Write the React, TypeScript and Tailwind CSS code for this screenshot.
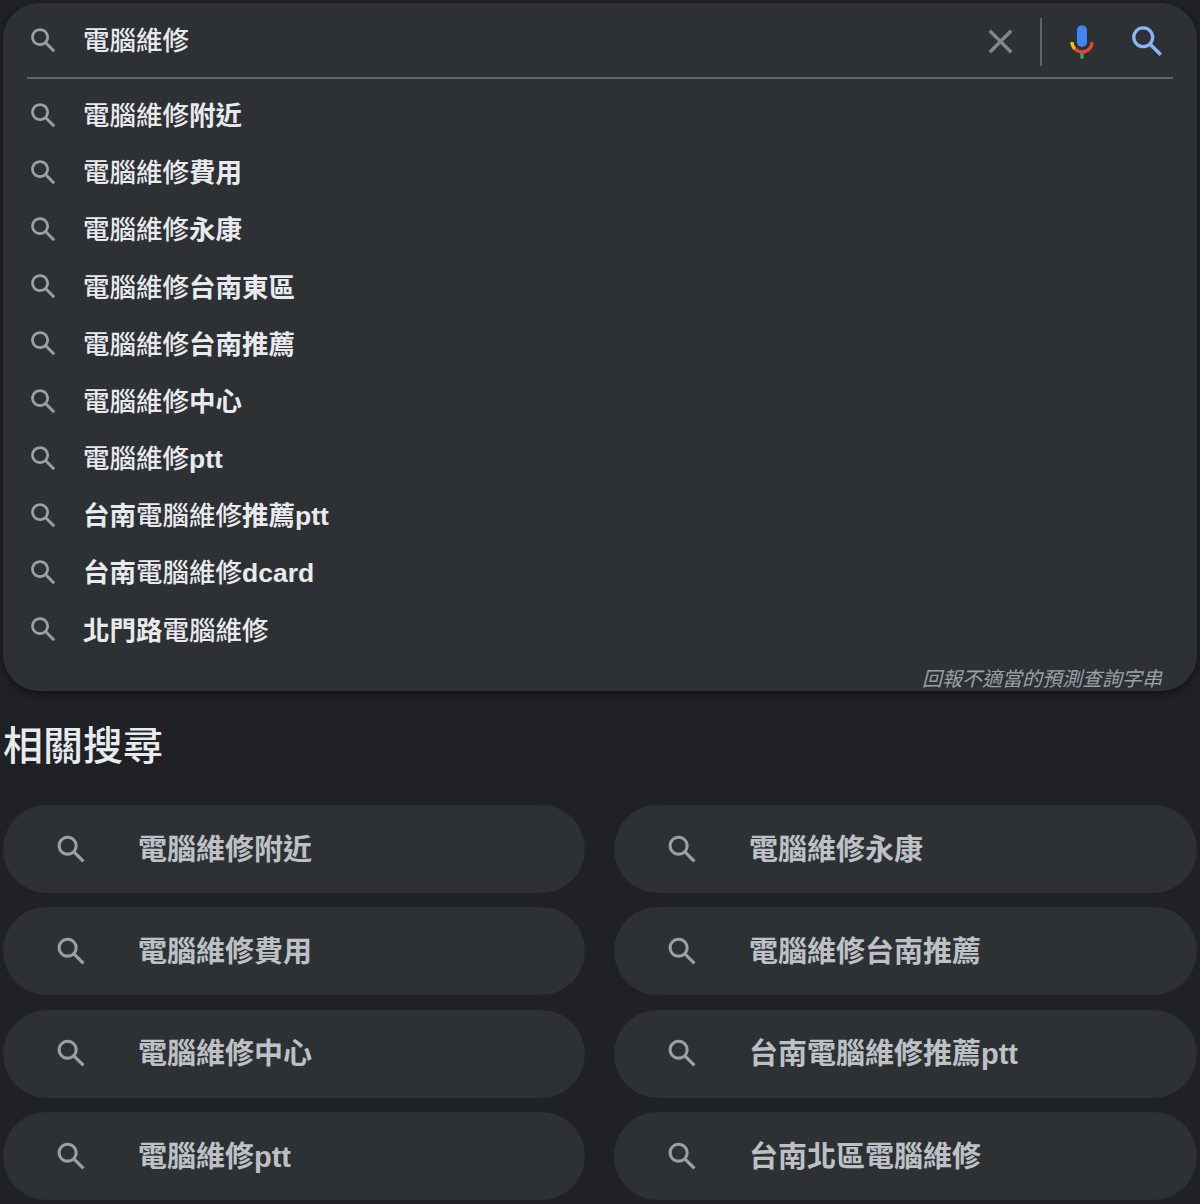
const SEARCH_PATH =
  "M20.49 19l-5.73-5.73C15.53 12.2 16 10.91 16 9.5 16 5.91 13.09 3 9.5 3S3 5.91 3 9.5 5.91 16 9.5 16c1.41 0 2.7-.47 3.77-1.24L19 20.49 20.49 19zM5 9.5C5 7.01 7.01 5 9.5 5S14 7.01 14 9.5 11.99 14 9.5 14 5 11.99 5 9.5z";

const suggestions = [
  "附近",
  "費用",
  "永康",
  "台南東區",
  "台南推薦",
  "中心",
  "ptt",
];

const related = [
  "電腦維修附近",
  "電腦維修永康",
  "電腦維修費用",
  "電腦維修台南推薦",
  "電腦維修中心",
  "台南電腦維修推薦ptt",
  "電腦維修ptt",
  "台南北區電腦維修",
];

function SearchIcon({ className }: { className: string }) {
  return (
    <svg viewBox="0 0 24 24" className={className} fill="currentColor">
      <path d={SEARCH_PATH} />
    </svg>
  );
}

function MicIcon() {
  return (
    <svg viewBox="0 0 24 24" className="h-[40px] w-[40px] shrink-0">
      <path fill="#4285f4" d="m12 15c1.66 0 3-1.31 3-2.97v-7.02c0-1.66-1.34-3.01-3-3.01s-3 1.34-3 3.01v7.02c0 1.66 1.34 2.97 3 2.97z" />
      <path fill="#34a853" d="m11 18.08h2v3.92h-2z" />
      <path fill="#fbbc05" d="m7.05 16.87c-1.27-1.33-2.05-2.83-2.05-4.87h2c0 1.45 0.56 2.42 1.47 3.38v0.32l-1.15 1.18z" />
      <path fill="#ea4335" d="m12 16.93a4.97 5.25 0 0 1 -3.54 -1.55l-1.41 1.49c1.26 1.34 3.02 2.13 4.95 2.13 3.87 0 6.99-2.92 6.99-6.99h-1.99c0 2.92-2.24 4.93-5 4.93z" />
    </svg>
  );
}

function SuggestionRow({ children }: { children: React.ReactNode }) {
  return (
    <li className="flex h-[57.2px] items-center pl-[24px]">
      <SearchIcon className="h-[33px] w-[33px] shrink-0 text-[#9aa0a6]" />
      <span className="ml-[23px] pt-[2px] text-[26.5px] font-medium leading-none text-[#e8eaed]">{children}</span>
    </li>
  );
}

export default function App() {
  return (
    <div
      className="h-[1204px] overflow-hidden bg-[#1f2125] px-[3px] pt-[3px]"
      style={{ fontFamily: '"Liberation Sans", "Noto Sans CJK TC", sans-serif' }}
    >
      <div className="h-[688px] rounded-[36px] bg-[#2e3134] shadow-[0_3px_6px_rgba(18,18,18,0.95)]">
        <div className="mx-[24px] flex h-[76px] items-center border-b-2 border-[#5f6368]">
          <SearchIcon className="h-[33px] w-[33px] shrink-0 text-[#9aa0a6]" />
          <span className="ml-[23px] flex-1 pt-[2px] text-[26.5px] font-medium leading-none text-[#e8eaed]">電腦維修</span>
          <div className="mr-[5px] mt-[3px] flex items-center">
            <svg viewBox="0 0 24 24" className="h-[41px] w-[41px] shrink-0 text-[#80868b]" fill="currentColor">
              <path d="M19 6.41L17.59 5 12 10.59 6.41 5 5 6.41 10.59 12 5 17.59 6.41 19 12 13.41 17.59 19 19 17.59 13.41 12z" />
            </svg>
            <div className="ml-[19px] h-[48px] w-[2px] bg-[#5f6368]" />
            <div className="ml-[20px]">
              <MicIcon />
            </div>
            <SearchIcon className="ml-[25px] h-[41px] w-[41px] shrink-0 text-[#8ab4f8]" />
          </div>
        </div>

        <ul className="pt-[7.6px]">
          {suggestions.map((s) => (
            <SuggestionRow key={s}>
              電腦維修<b className="font-bold">{s}</b>
            </SuggestionRow>
          ))}
          <SuggestionRow>
            <b className="font-bold">台南</b>電腦維修<b className="font-bold">推薦ptt</b>
          </SuggestionRow>
          <SuggestionRow>
            <b className="font-bold">台南</b>電腦維修<b className="font-bold">dcard</b>
          </SuggestionRow>
          <SuggestionRow>
            <b className="font-bold">北門路</b>電腦維修
          </SuggestionRow>
        </ul>

        <div className="mt-[10.5px] pr-[35px] text-right text-[20px] italic leading-none text-[#9aa0a6]">
          回報不適當的預測查詢字串
        </div>
      </div>

      <h2 className="mt-[32px] text-[40px] font-medium leading-[46px] text-[#e8eaed]">相關搜尋</h2>

      <div className="mt-[36px] grid grid-cols-[582px_583px] gap-x-[29px] gap-y-[14.4px]">
        {related.map((r) => (
          <div key={r} className="flex h-[88px] items-center rounded-full bg-[#2e3134] pl-[50px]">
            <SearchIcon className="h-[37px] w-[37px] shrink-0 text-[#9aa0a6]" />
            <span className="ml-[48px] pt-[2px] text-[29px] font-bold leading-none text-[#bdc1c6]">{r}</span>
          </div>
        ))}
      </div>
    </div>
  );
}
